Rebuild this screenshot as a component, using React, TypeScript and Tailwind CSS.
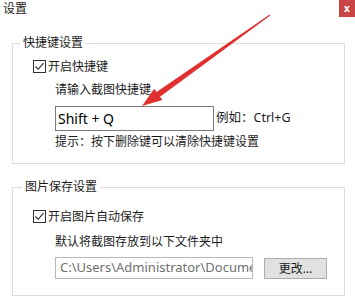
import React from "react";

const CheckBox = () => (
    <span className="inline-flex items-center justify-center w-[13px] h-[13px] border border-[#333] bg-white shrink-0">
        <svg width="11" height="11" viewBox="0 0 11 11">
            <path d="M1.5 5.5 L4.2 8.3 L9.5 2.2" fill="none" stroke="#222" strokeWidth="1.1" />
        </svg>
    </span>
);

const App = () => {
    return (
        <div className="relative w-[355px] h-[302px] bg-white overflow-hidden font-['Noto_Sans','Noto_Sans_CJK_SC',sans-serif] text-[12px] text-[#1c1c1c]">
            {/* title bar */}
            <div className="flex items-start justify-between h-[17px]">
                <div className="pl-[3px] pt-[3px] leading-[12px]">设置</div>
                <button
                    type="button"
                    className="w-[16px] h-[17px] bg-[#c94545] text-white text-[10px] font-bold leading-[17px] text-center"
                >
                    x
                </button>
            </div>

            <div className="px-[11px]">
                {/* shortcut settings */}
                <fieldset className="mt-[20px] ml-[1px] w-[333px] border border-[#dcdcdc] pl-[20px] pt-[11px] pb-[13px]">
                    <legend className="ml-[-13px] px-[3px] leading-[12px]">快捷键设置</legend>
                    <div className="flex items-center gap-[2px] h-[13px] leading-[13px]">
                        <CheckBox />
                        <span>开启快捷键</span>
                    </div>
                    <div className="ml-[22px] mt-[9px] leading-[16px]">请输入截图快捷键</div>
                    <div className="ml-[22px] mt-[8px] flex items-center">
                        <div className="w-[159px] h-[25px] border border-[#7a7a7a] px-[2px] flex items-center text-[14px] text-black">
                            Shift + Q
                        </div>
                        <span className="ml-[2px] text-[12.5px]">例如：Ctrl+G</span>
                    </div>
                    <div className="ml-[22px] mt-[3px] leading-[16px]">提示：按下删除键可以清除快捷键设置</div>
                </fieldset>

                {/* picture save settings */}
                <fieldset className="mt-[17px] w-[333px] ml-[1px] border border-[#dcdcdc] pl-[20px] pt-[17px] pb-[16px]">
                    <legend className="ml-[-11px] px-[3px] leading-[12px]">图片保存设置</legend>
                    <div className="flex items-center gap-[2px] h-[13px] leading-[13px]">
                        <CheckBox />
                        <span>开启图片自动保存</span>
                    </div>
                    <div className="ml-[22px] mt-[11px] leading-[16px]">默认将截图存放到以下文件夹中</div>
                    <div className="ml-[22px] mt-[7px] flex items-center">
                        <div className="w-[198px] h-[22px] border border-[#b8b8b8] pl-[4px] flex items-center overflow-hidden whitespace-nowrap text-[13px] text-[#707070]">
                            C:\Users\Administrator\Documen
                        </div>
                        <button
                            type="button"
                            className="ml-[11px] w-[63px] h-[21px] bg-[#e1e1e1] border border-[#adadad] leading-[19px] text-[12px]"
                        >
                            更改...
                        </button>
                    </div>
                </fieldset>
            </div>

            {/* red annotation arrow */}
            <svg
                className="absolute top-0 left-0 pointer-events-none"
                width="355"
                height="302"
                viewBox="0 0 355 302"
            >
                <polygon
                    points="142,106 162.4,100.1 160,96.8 270.3,15.4 269.7,14.6 156.6,92 154.2,88.7"
                    fill="#e03030"
                />
            </svg>
        </div>
    );
};

export default App;
